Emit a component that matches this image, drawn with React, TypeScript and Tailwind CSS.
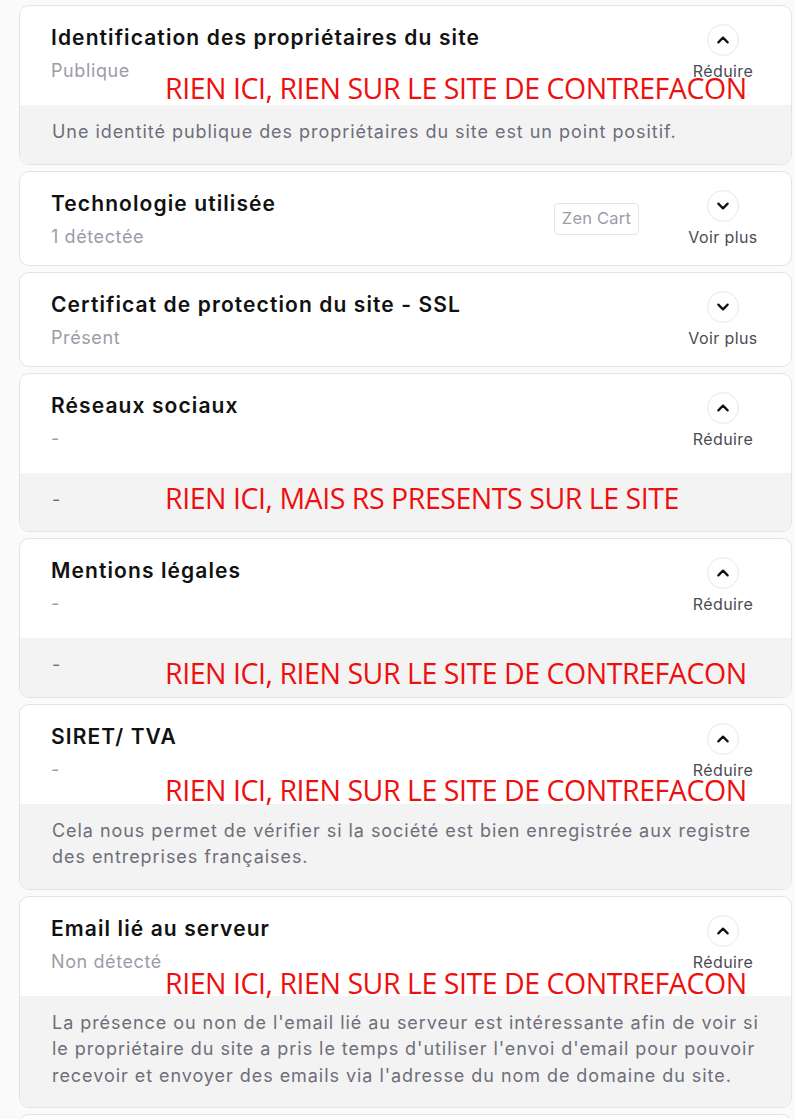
import React from "react";

type Card = {
  title: string;
  sub: string;
  open: boolean;
  badge?: string;
  body?: string[];
  red?: { text: string; top: number };
};

const cards: Card[] = [
  {
    title: "Identification des propriétaires du site",
    sub: "Publique",
    open: true,
    body: ["Une identité publique des propriétaires du site est un point positif."],
    red: { text: "RIEN ICI, RIEN SUR LE SITE DE CONTREFACON", top: 82 },
  },
  { title: "Technologie utilisée", sub: "1 détectée", open: false, badge: "Zen Cart" },
  { title: "Certificat de protection du site - SSL", sub: "Présent", open: false },
  {
    title: "Réseaux sociaux",
    sub: "-",
    open: true,
    body: ["-"],
    red: { text: "RIEN ICI, MAIS RS PRESENTS SUR LE SITE", top: 124 },
  },
  {
    title: "Mentions légales",
    sub: "-",
    open: true,
    body: ["-"],
    red: { text: "RIEN ICI, RIEN SUR LE SITE DE CONTREFACON", top: 134 },
  },
  {
    title: "SIRET/ TVA",
    sub: "-",
    open: true,
    body: [
      "Cela nous permet de vérifier si la société est bien enregistrée aux registre",
      "des entreprises françaises.",
    ],
    red: { text: "RIEN ICI, RIEN SUR LE SITE DE CONTREFACON", top: 85 },
  },
  {
    title: "Email lié au serveur",
    sub: "Non détecté",
    open: true,
    body: [
      "La présence ou non de l'email lié au serveur est intéressante afin de voir si",
      "le propriétaire du site a pris le temps d'utiliser l'envoi d'email pour pouvoir",
      "recevoir et envoyer des emails via l'adresse du nom de domaine du site.",
    ],
    red: { text: "RIEN ICI, RIEN SUR LE SITE DE CONTREFACON", top: 86 },
  },
];

function Chevron({ up }: { up: boolean }) {
  return (
    <svg width="16" height="16" viewBox="0 0 24 24" fill="none" stroke="#111" strokeWidth="3.4" strokeLinecap="round" strokeLinejoin="round">
      {up ? <path d="M5 15.5l7-7 7 7" /> : <path d="M5 8.5l7 7 7-7" />}
    </svg>
  );
}

function CardView({ c }: { c: Card }) {
  return (
    <div className="relative rounded-[10px] border border-[#e4e4e4] bg-white overflow-hidden">
      <div className={`flex items-start pl-[31px] pr-[31px] ${c.open ? "h-[99px]" : "h-[93px]"}`}>
        <div className="flex-1 pt-[19px]">
          <div className="text-[21px] leading-[26px] font-semibold text-[#111111] tracking-[1.1px]">{c.title}</div>
          <div className="mt-[8px] text-[18px] leading-[24px] text-[#9c9ca8] tracking-[0.6px]">{c.sub}</div>
        </div>
        {c.badge && (
          <div className="mt-[31px] mr-[47px] h-[32px] px-[7px] flex items-center rounded-[4px] border border-[#e6e6e6] text-[16.5px] text-[#9c9ca8] tracking-[0.2px]">
            {c.badge}
          </div>
        )}
        <div className="w-[74px] flex flex-col items-center pt-[18px]">
          <div className="w-[32px] h-[32px] rounded-full border border-[#e8e8e8] bg-white flex items-center justify-center">
            <Chevron up={c.open} />
          </div>
          <div className="mt-[5px] text-[16px] leading-[20px] text-[#4b4b55] whitespace-nowrap tracking-[0.4px]">{c.open ? "Réduire" : "Voir plus"}</div>
        </div>
      </div>
      {c.open && c.body && (
        <div className="bg-[#f3f3f3] pl-[32px] pr-[10px] pt-[14px] pb-[18px] text-[18px] leading-[26.5px] text-[#6e6e7a] tracking-[0.95px]">
          {c.body.map((l, i) => (
            <div key={i} className="whitespace-nowrap">{l}</div>
          ))}
        </div>
      )}
      {c.red && (
        <div
          className="absolute left-[145px] text-[28.5px] leading-[32px] text-[#ee0f0f] whitespace-nowrap tracking-[-0.45px]"
          style={{ top: c.red.top - 16, fontFamily: '"Open Sans", sans-serif' }}
        >
          {c.red.text}
        </div>
      )}
    </div>
  );
}

export default function App() {
  return (
    <div className="min-h-[1119px] bg-[#fafafa] pl-[19px] pr-[3px] pt-[5px] flex flex-col gap-[6px]" style={{ fontFamily: 'Inter, "Noto Sans", sans-serif' }}>
      {cards.map((c, i) => (
        <CardView key={i} c={c} />
      ))}
      <div className="rounded-[10px] border border-[#e4e4e4] bg-white h-[60px]" />
    </div>
  );
}
